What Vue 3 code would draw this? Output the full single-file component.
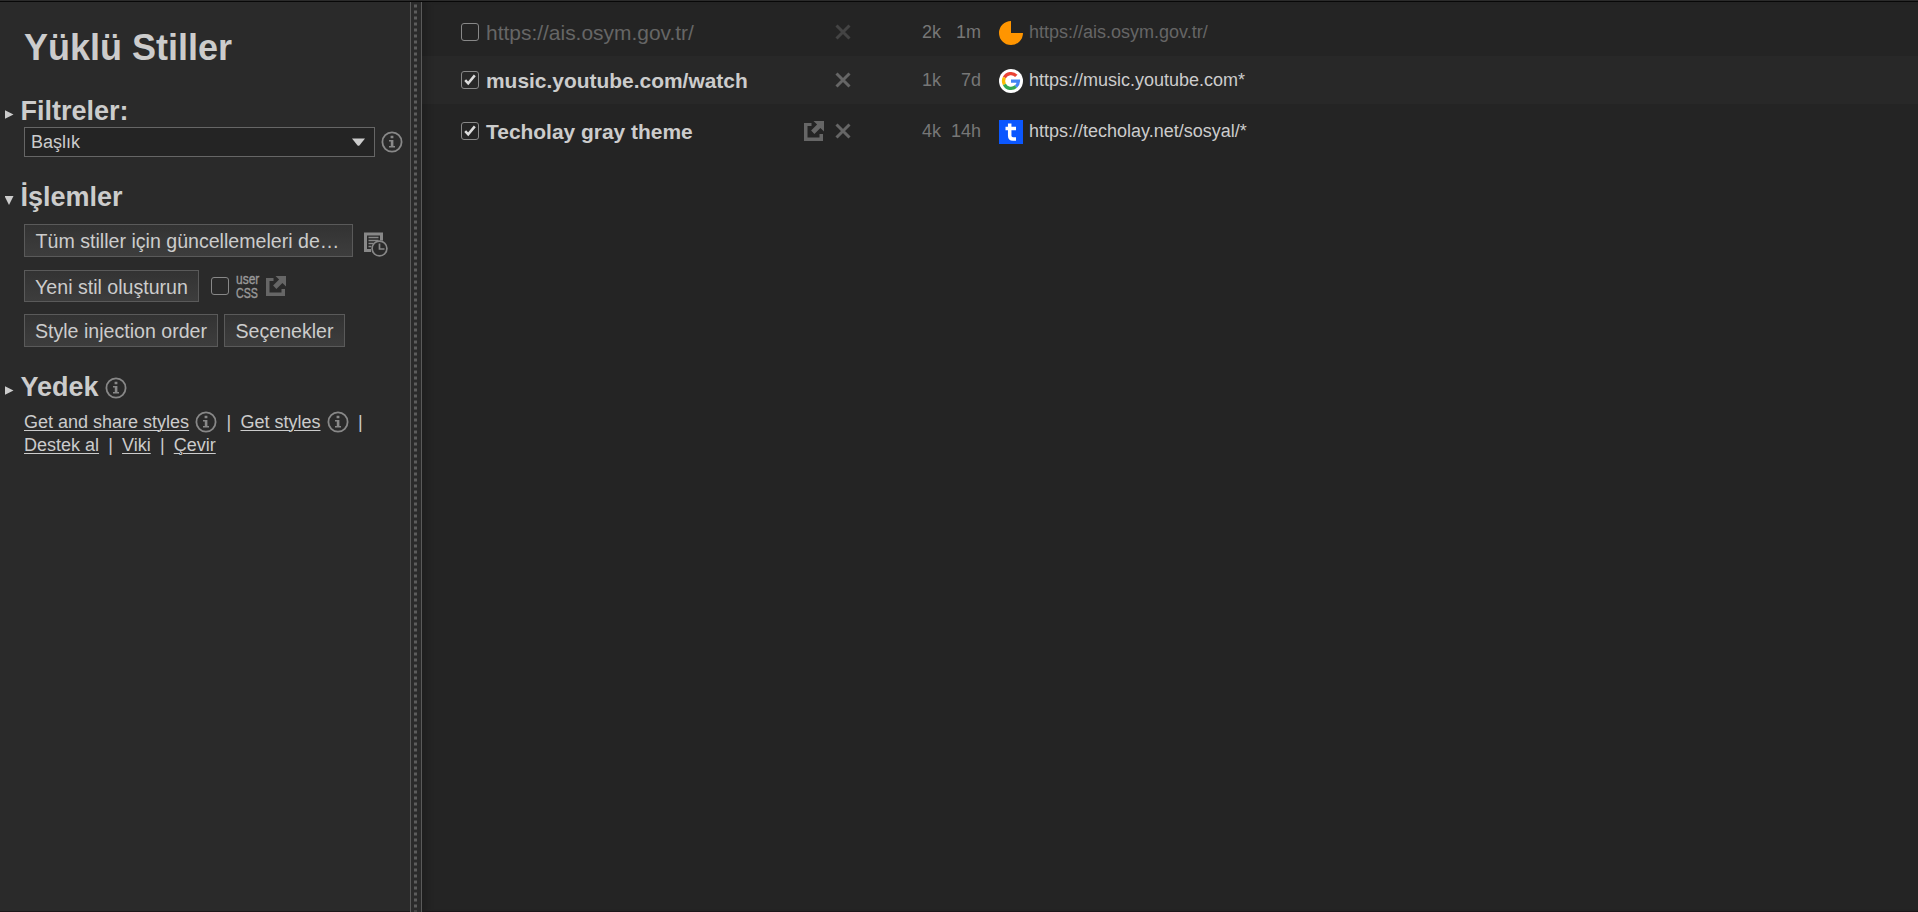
<script setup>
const styles = [
  { name: 'https://ais.osym.gov.tr/', enabled: false, edit: false, size: '2k', age: '1m', icon: 'pie', target: 'https://ais.osym.gov.tr/' },
  { name: 'music.youtube.com/watch', enabled: true, edit: false, size: '1k', age: '7d', icon: 'google', target: 'https://music.youtube.com*' },
  { name: 'Techolay gray theme', enabled: true, edit: true, size: '4k', age: '14h', icon: 'techolay', target: 'https://techolay.net/sosyal/*' },
]
</script>

<template>
  <div class="page">
    <svg class="defs" aria-hidden="true">
      <symbol id="info" viewBox="0 0 22 22">
        <circle cx="11" cy="11" r="9.6" fill="none" stroke="currentColor" stroke-width="1.8" />
        <path d="M9.6 4.8h2.8v2.5H9.6zM8 9h4.4v6H14v1.6H8V15h1.800v-4.400H8z" fill="currentColor" />
      </symbol>
      <symbol id="external" viewBox="0 0 20 20">
        <path d="M0 2h7.500v3H3.500v11.500h12V13h3.500v7H0z" fill="currentColor" />
        <path d="M9.500 0H20v10.500l-3.600-3.600-6 6-3.300-3.300 6-6z" fill="currentColor" />
      </symbol>
    </svg>

    <aside class="sidebar">
      <h1>Yüklü Stiller</h1>

      <h2 class="filters"><i class="tri right"></i>Filtreler:</h2>
      <div class="row select-row">
        <div class="select"><span>Başlık</span><svg width="13" height="8" viewBox="0 0 13 8"><path d="M0 0.5h13L7.6 7.3Q6.5 8.3 5.4 7.3z" fill="#ccc" /></svg></div>
        <svg class="info"><use href="#info" /></svg>
      </div>

      <h2 class="actions"><i class="tri down"></i>İşlemler</h2>
      <div class="row update-row">
        <button class="wide">Tüm stiller için güncellemeleri de…</button>
        <svg class="log" width="24" height="25" viewBox="0 0 24 25">
          <path d="M0 0.500h19v8h-3V3.500H3V17h4v3H0z" fill="#888" />
          <path d="M4.500 5.500h10M4.500 8.500h10M4.500 11.500h5M4.500 14.500h3" stroke="#888" stroke-width="1.5" />
          <circle cx="15.500" cy="16.500" r="7.400" fill="#2a2a2a" stroke="#888" stroke-width="1.700" />
          <path d="M15.500 11.500v5.500h5" fill="none" stroke="#888" stroke-width="1.700" />
        </svg>
      </div>
      <div class="row create-row">
        <button class="create">Yeni stil oluşturun</button>
        <span class="check"></span>
        <span class="usercss"><b class="user">user</b><b class="css">CSS</b></span>
        <svg class="external"><use href="#external" /></svg>
      </div>
      <div class="row options-row">
        <button class="order">Style injection order</button>
        <button class="options">Seçenekler</button>
      </div>

      <h2 class="backup"><i class="tri right"></i>Yedek<svg class="info"><use href="#info" /></svg></h2>
      <div class="links first">
        <a class="share">Get and share styles</a><svg class="info"><use href="#info" /></svg><span class="bar">|</span>
        <a class="get">Get styles</a><svg class="info"><use href="#info" /></svg><span class="bar">|</span>
      </div>
      <div class="links">
        <a>Destek al</a><span class="bar">|</span><a>Viki</a><span class="bar">|</span><a>Çevir</a>
      </div>
    </aside>

    <div class="splitter">
      <svg width="10" height="910"><path d="M4.500 2.500v907" stroke="#5c5c5c" stroke-width="3" stroke-dasharray="3 3" /></svg>
    </div>

    <main class="list">
      <div v-for="s in styles" :key="s.name" class="entry" :class="{ off: !s.enabled }">
        <span class="check">
          <svg v-if="s.enabled" width="12" height="12" viewBox="0 0 12 12"><path d="M1.200 6.200l3 3.200L10.800 1.400" fill="none" stroke="#ddd" stroke-width="2.500" /></svg>
        </span>
        <span class="name">{{ s.name }}</span>
        <span class="tools">
          <svg v-if="s.edit" class="external"><use href="#external" /></svg>
          <svg class="del" width="16" height="16" viewBox="0 0 16 16"><path d="M1.500 1.500l13 13M14.500 1.500l-13 13" stroke="currentColor" stroke-width="3" /></svg>
        </span>
        <span class="size">{{ s.size }}</span>
        <span class="age">{{ s.age }}</span>
        <svg class="favicon" viewBox="0 0 24 24">
          <path v-if="s.icon === 'pie'" d="M12 12V0A12 12 0 1 0 24 12z" fill="#ff9500" />
          <g v-else-if="s.icon === 'google'">
            <circle cx="12" cy="12" r="12" fill="#fff" />
            <g fill="none" stroke-width="3.300">
              <path d="M5.400 8.600A7.400 7.400 0 0 1 17.300 6.800" stroke="#ea4335" />
              <path d="M5.400 15.400A7.400 7.400 0 0 1 5.400 8.600" stroke="#fbbc05" />
              <path d="M16.900 17.500A7.400 7.400 0 0 1 5.400 15.400" stroke="#34a853" />
              <path d="M12 12.200H19.400A7.400 7.400 0 0 1 16.900 17.500" stroke="#4285f4" />
            </g>
          </g>
          <g v-else>
            <path d="M0 0h24v24H0z" fill="#0b57ff" />
            <path d="M10.700 3.500v12.300q0 3.200 3.300 3.200h3M6.500 8.500h10.500" fill="none" stroke="#fff" stroke-width="3.500" />
          </g>
        </svg>
        <span class="target">{{ s.target }}</span>
      </div>
    </main>
  </div>
</template>

<style>
body { background: #242424; overflow: hidden; }
</style>

<style scoped>
.page {
  display: flex;
  box-sizing: border-box;
  height: 912px;
  border-top: 1px solid #2b2b2b;
  box-shadow: inset 0 1px #080808, inset 0 -1px #1d171a;
  padding-top: 1px;
  background: #242424;
  color: #ccc;
  font: 18px/22px "Liberation Sans", Arial, sans-serif;
}
.defs { position: absolute; width: 0; height: 0; }
svg { display: block; flex: none; }
.sidebar { width: 410px; flex: none; background: #2a2a2a; box-sizing: border-box; padding-left: 24px; height: 909px; }
h1 { margin: 26px 0 0; font-size: 36px; line-height: 40px; height: 40px; }
h2 { display: flex; align-items: center; margin: 0 0 0 -19.5px; font-size: 27px; line-height: 30px; height: 30px; }
.filters { margin-top: 28px; }
.actions { margin-top: 25px; }
.backup { margin-top: 25px; }
.backup .info { margin: 2px 0 0 6px; }
.tri { width: 9px; height: 9px; margin: 7px 7px 0 0; background: #ccc; flex: none; }
.right { clip-path: polygon(0 0, 100% 50%, 0 100%); }
.down { clip-path: polygon(0 0, 100% 0, 50% 100%); }
.row { display: flex; align-items: center; }
.select-row { margin-top: 1px; height: 30px; }
.select { display: flex; align-items: center; justify-content: space-between; box-sizing: border-box; width: 351px; height: 30px; padding: 0 9px 0 6px; border: 1px solid #666; background: #242424; }
.info { width: 22px; height: 22px; color: #888; }
.select-row .info { margin-left: 6px; }
button { box-sizing: border-box; height: 33px; padding: 1px 0 0; border: 1px solid #5a5a5a; background: linear-gradient(#333, #3d3d3d); color: #ccc; font: 19.600px/24px "Liberation Sans", Arial, sans-serif; white-space: nowrap; }
.update-row { margin-top: 12px; height: 33px; }
.wide { width: 329px; padding-right: 2px; }
.log { margin: 8px 0 0 11px; }
.create-row { margin-top: 13px; height: 32px; }
.create { width: 175px; height: 32px; }
.create-row .check { margin-left: 12px; }
.usercss { display: flex; flex-direction: column; gap: 1px; width: 23px; height: 27px; margin: 0 0 1px 7px; color: #999; font: 15px/13px "Liberation Sans", Arial, sans-serif; -webkit-text-stroke: .4px #999; }
.usercss b { height: 13px; width: max-content; font-weight: 400; transform-origin: 0 50%; }
.user { transform: scaleX(.8); }
.css { transform: scaleX(.71); }
.create-row .external { margin: 0 0 0 7px; }
.external { width: 20px; height: 20px; color: #666; }
.options-row { margin-top: 12px; gap: 6px; }
.order { width: 194px; }
.options { width: 121px; }
.check { display: flex; align-items: center; justify-content: center; box-sizing: border-box; width: 18px; height: 18px; border: 1px solid #888; border-radius: 3px; flex: none; }
.links { display: flex; align-items: center; height: 23px; }
.links.first { margin-top: 8px; }
.links a { text-decoration: underline; text-underline-offset: 2px; text-decoration-thickness: 1px; white-space: nowrap; }
.share { width: 165px; }
.links .info { margin-left: 6px; }
.bar { width: 23px; text-align: center; }
.first .bar { width: 23.500px; }
.splitter { width: 10px; flex: none; border: solid #5a5a5a; border-width: 0 1px; background: #2a2a2a; }
.list { flex: 1; box-shadow: inset 9px 0 9px -7px #1c1c1c; }
.entry { display: flex; align-items: center; height: 48px; padding-left: 39px; }
.entry:first-child { height: 49px; padding-top: 5px; }
.entry:nth-child(2) { background: rgba(255, 255, 255, .02); }
.entry:nth-child(3) { padding-top: 3px; }
.name { width: 314px; margin: 2px 0 0 7px; font-size: 20.950px; line-height: 24px; font-weight: 700; white-space: nowrap; }
.off .name { font-weight: 400; color: #666; }
.tools { display: flex; justify-content: flex-end; align-items: center; gap: 11px; width: 51px; color: #666; }
.off .tools { color: #444; }
.size { width: 90px; text-align: right; color: #777; }
.age { width: 40px; text-align: right; color: #777; }
.favicon { width: 24px; height: 24px; margin: 2px 6px 0 18px; }
.target { white-space: nowrap; }
.off .target { color: #666; }
</style>
